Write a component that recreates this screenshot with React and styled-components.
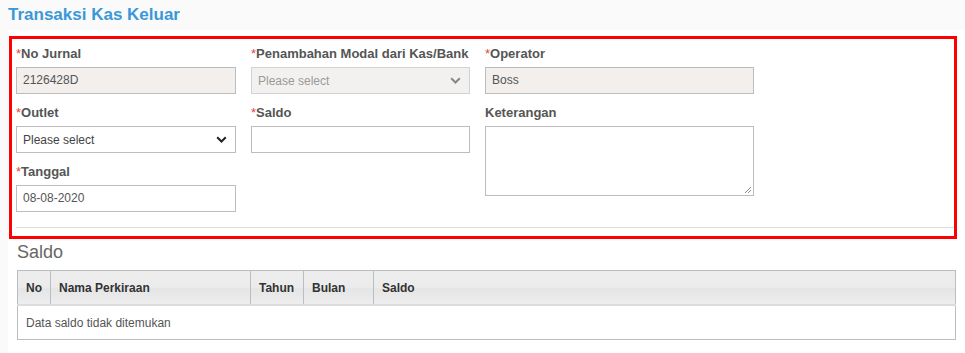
import React from "react";
import styled, { createGlobalStyle } from "styled-components";

const GlobalStyle = createGlobalStyle`
  body {
    margin: 0;
    background: #fafafa;
    font-family: "Liberation Sans", Arial, sans-serif;
    color: #555;
  }
`;

const fields = [
  { key: "jurnal", label: "No Jurnal", required: true, type: "readonly", value: "2126428D" },
  { key: "modal", label: "Penambahan Modal dari Kas/Bank", required: true, type: "select", disabled: true },
  { key: "operator", label: "Operator", required: true, type: "readonly", value: "Boss" },
  { key: "outlet", label: "Outlet", required: true, type: "select" },
  { key: "saldo", label: "Saldo", required: true, type: "text", value: "" },
  { key: "ket", label: "Keterangan", type: "textarea", tall: true },
  { key: "tanggal", label: "Tanggal", required: true, type: "text", value: "08-08-2020" },
];

const columns = [
  { label: "No", width: 33 },
  { label: "Nama Perkiraan", width: 200 },
  { label: "Tahun", width: 53 },
  { label: "Bulan", width: 70 },
  { label: "Saldo" },
];

const Chevron = ({ color }) => (
  <svg width="11" height="7" viewBox="0 0 11 7">
    <path d="M1.2 1.2 L5.5 5.5 L9.8 1.2" fill="none" stroke={color} strokeWidth="2" />
  </svg>
);

const Control = ({ type, value, disabled }) => {
  if (type === "select") {
    return (
      <SelectBox disabled={disabled}>
        <span>Please select</span>
        <Chevron color={disabled ? "#888" : "#222"} />
      </SelectBox>
    );
  }
  if (type === "textarea") {
    return (
      <TextArea>
        <svg width="9" height="9" viewBox="0 0 9 9">
          <path d="M8 2 L2 8 M8 5 L5 8" stroke="#888" strokeWidth="1" />
        </svg>
      </TextArea>
    );
  }
  return <InputBox readOnlyBox={type === "readonly"}>{value}</InputBox>;
};

const App = () => {
  return (
    <>
      <GlobalStyle />
      <Title>Transaksi Kas Keluar</Title>
      <Panel>
        <FormBox>
          <FormGrid>
            {fields.map((f) => (
              <Field key={f.key} tall={f.tall}>
                <Label>
                  {f.required && <Star>*</Star>}
                  {f.label}
                </Label>
                <Control type={f.type} value={f.value} disabled={f.disabled} />
              </Field>
            ))}
          </FormGrid>
          <Divider />
        </FormBox>

        <SectionTitle>Saldo</SectionTitle>
        <Table>
          <colgroup>
            {columns.map((c) => (
              <col key={c.label} style={c.width ? { width: c.width } : null} />
            ))}
          </colgroup>
          <thead>
            <tr>
              {columns.map((c) => (
                <Th key={c.label}>{c.label}</Th>
              ))}
            </tr>
          </thead>
          <tbody>
            <tr>
              <Td colSpan={columns.length}>Data saldo tidak ditemukan</Td>
            </tr>
          </tbody>
        </Table>
      </Panel>
    </>
  );
};

export default App;

const Title = styled.div`
  height: 30px;
  box-sizing: border-box;
  padding: 5px 8px 0;
  font-size: 17px;
  font-weight: bold;
  line-height: 20px;
  color: #3a98d8;
`;

const Panel = styled.div`
  margin-left: 8px;
  background: #fff;
  padding: 6px 0 20px;
`;

const FormBox = styled.div`
  margin-left: 1px;
  width: 948px;
  box-sizing: border-box;
  border: 3px solid #ff0000;
  padding: 5px 0 8px 4px;
`;

const FormGrid = styled.div`
  display: grid;
  grid-template-columns: 220px 219px 269px;
  grid-auto-rows: 50px;
  column-gap: 15px;
  row-gap: 9px;
`;

const Field = styled.div`
  display: flex;
  flex-direction: column;
  grid-row: ${(p) => (p.tall ? "span 2" : "auto")};
`;

const Label = styled.div`
  font-size: 13px;
  font-weight: bold;
  line-height: 18px;
  color: #555;
  margin: 1px 0 4px;
  white-space: nowrap;
`;

const Star = styled.span`
  color: #e8453c;
  font-weight: normal;
`;

const InputBox = styled.div`
  height: 27px;
  box-sizing: border-box;
  border: 1px solid ${(p) => (p.readOnlyBox ? "#bcbcbc" : "#bdbdbd")};
  background: ${(p) => (p.readOnlyBox ? "#f2efed" : "#fff")};
  padding: 0 6px;
  font-size: 12px;
  line-height: 25px;
  color: #555;
`;

const SelectBox = styled.div`
  height: 27px;
  box-sizing: border-box;
  border: 1px solid ${(p) => (p.disabled ? "#d2d2d2" : "#bdbdbd")};
  background: ${(p) => (p.disabled ? "#f3f1ef" : "#fff")};
  padding: 0 8px 0 6px;
  display: flex;
  align-items: center;
  justify-content: space-between;
  font-size: 12px;
  color: ${(p) => (p.disabled ? "#999" : "#444")};
`;

const TextArea = styled.div`
  height: 70px;
  box-sizing: border-box;
  border: 1px solid #bdbdbd;
  background: #fff;
  display: flex;
  align-items: flex-end;
  justify-content: flex-end;
  padding: 0 1px 1px 0;
`;

const Divider = styled.div`
  margin-top: 15px;
  height: 1px;
  background: #dddddd;
`;

const SectionTitle = styled.div`
  margin: 2px 0 7px 9px;
  font-size: 18px;
  line-height: 22px;
  color: #666;
`;

const Table = styled.table`
  margin-left: 9px;
  width: 939px;
  table-layout: fixed;
  border-collapse: collapse;
  border: 1px solid #b8bfc2;
  font-size: 12px;
`;

const Th = styled.th`
  height: 33px;
  padding: 0 8px;
  text-align: left;
  font-weight: bold;
  color: #333;
  border: 1px solid #b8bfc2;
  border-bottom: 2px solid #dcdcdc;
  background: linear-gradient(
    #ededed 0%,
    #ececec 48%,
    #e5e5e5 52%,
    #eaeaea 80%,
    #eeeeee 100%
  );
`;

const Td = styled.td`
  height: 33px;
  padding: 0 8px;
  color: #555;
  border: 1px solid #b8bfc2;
  border-top: none;
`;
